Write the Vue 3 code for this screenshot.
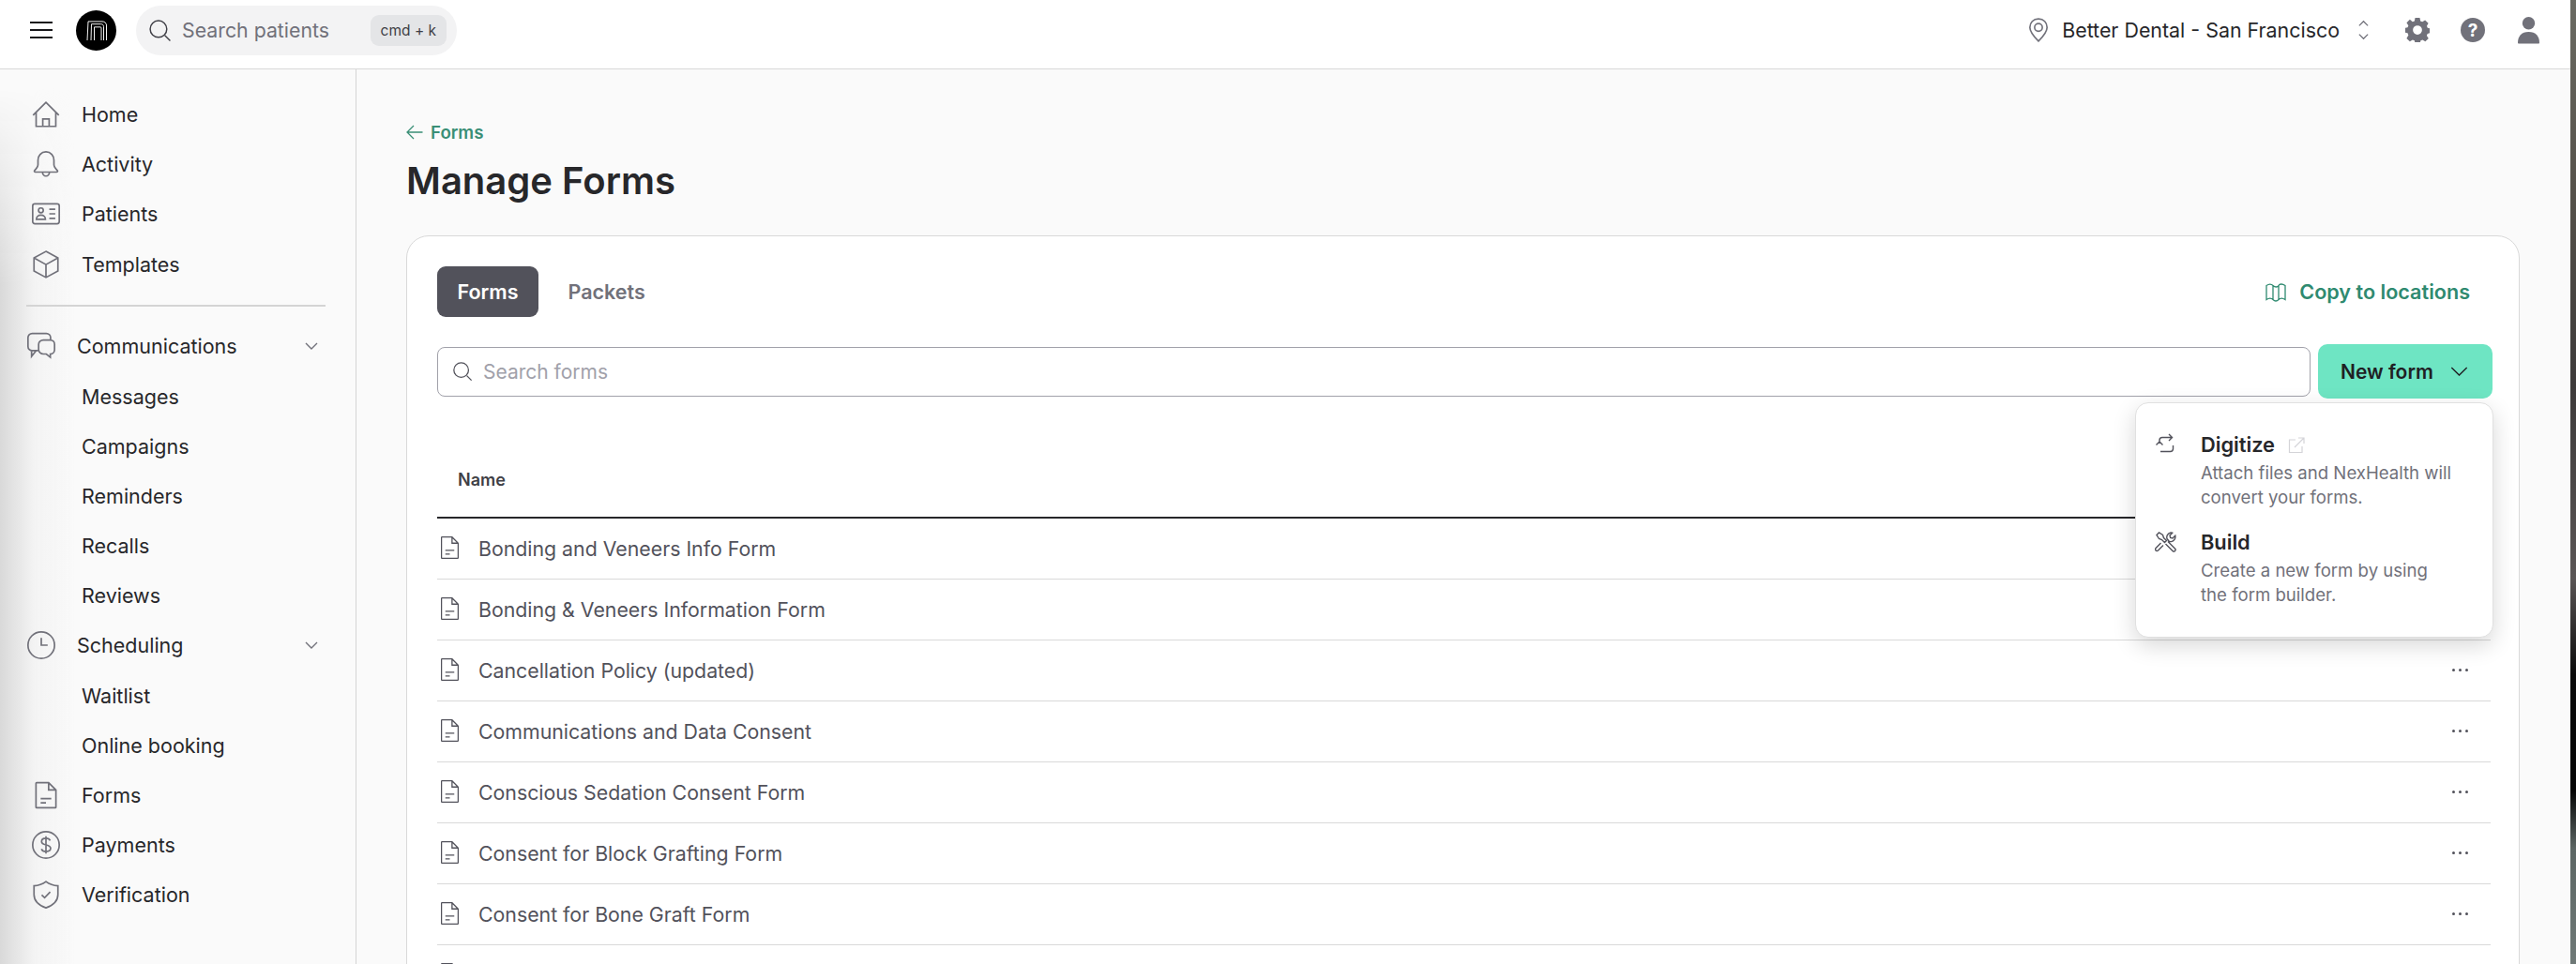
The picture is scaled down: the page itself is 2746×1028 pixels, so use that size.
<script setup>
const topNav = [
  { label: 'Home', icon: 'home' },
  { label: 'Activity', icon: 'bell' },
  { label: 'Patients', icon: 'card' },
  { label: 'Templates', icon: 'cube' },
]
const commsNav = ['Messages', 'Campaigns', 'Reminders', 'Recalls', 'Reviews']
const schedNav = ['Waitlist', 'Online booking']
const bottomNav = [
  { label: 'Forms', icon: 'doc' },
  { label: 'Payments', icon: 'dollar' },
  { label: 'Verification', icon: 'shield' },
]
// last one is cut off by the window, only the top of its icon shows
const forms = [
  'Bonding and Veneers Info Form',
  'Bonding & Veneers Information Form',
  'Cancellation Policy (updated)',
  'Communications and Data Consent',
  'Conscious Sedation Consent Form',
  'Consent for Block Grafting Form',
  'Consent for Bone Graft Form',
  '',
]

const iconPaths = {
  home: 'M2.3 12.6 12 3l9.7 9.6M4.6 10.4V21h14.8V10.4M9.6 21v-5.6h4.8V21',
  bell: 'M12 2.8c-3.6 0-6 2.8-6 6.2v3.4c0 1.6-1.2 3-2.6 4.4-.4.5-.1 1.2.6 1.2h16c.7 0 1-.7.6-1.2-1.4-1.4-2.6-2.8-2.6-4.4V9c0-3.4-2.4-6.2-6-6.2ZM9.4 18c0 1.6 1.1 3 2.6 3s2.6-1.4 2.6-3',
  card: 'M3.6 4.5h16.8c.9 0 1.6.7 1.6 1.6v11.8c0 .9-.7 1.6-1.6 1.6H3.6c-.9 0-1.6-.7-1.6-1.6V6.1c0-.9.7-1.6 1.6-1.6ZM14.5 8.5H19M14.5 12H19M14.5 15.5H19M8.2 7.6a1.8 1.8 0 1 1 0 3.6 1.8 1.8 0 0 1 0-3.6ZM4.8 16.2c0-1.9 1.5-3.2 3.4-3.2s3.4 1.3 3.4 3.2Z',
  cube: 'M12 2.2 21 7.1v9.8l-9 4.9-9-4.9V7.1ZM3 7.1l9 5 9-5M12 12.1v9.7',
  doc: 'M5 2.5h9l5.5 5.5v13c0 .3-.2.5-.5.5H5c-.3 0-.5-.2-.5-.5V3c0-.3.2-.5.5-.5ZM14 2.5V8h5.5M8 14.5h8M8 17.8h4',
  dollar: 'M12 2a10 10 0 1 1 0 20 10 10 0 0 1 0-20ZM15.2 8.8c-.5-1.1-1.7-1.8-3.2-1.8-1.9 0-3.3 1-3.3 2.5 0 3.4 6.8 1.6 6.8 5 0 1.5-1.5 2.5-3.5 2.5-1.6 0-2.9-.7-3.4-1.9M12 5.5v13',
  shield: 'M12 2.2c2.7 2 5.5 3 9 3.2V12c0 4.7-3.5 8-9 10-5.5-2-9-5.3-9-10V5.4c3.5-.2 6.3-1.2 9-3.2ZM8.8 12.2l2.2 2.2 4.2-4.4',
  comms: 'M9.5 15.5H5.2C3.4 15.5 2 14 2 12.3V5.7C2 3.9 3.4 2.5 5.2 2.5h10.6c1.8 0 3.2 1.4 3.2 3.2v1.8M4.7 15.5v4.3l3.4-4.3M13.5 7.5h5.3c1.8 0 3.2 1.4 3.2 3.2v4.1c0 1.7-1.4 3.2-3.2 3.2v2.500l-3-2.500h-2.300c-1.800 0-3.500-1.500-3.500-3.200v-4.100c0-1.800 1.700-3.200 3.500-3.200Z',
  clock: 'M12 2a10 10 0 1 1 0 20 10 10 0 0 1 0-20ZM12 6.5V12h4.8',
}
</script>

<template>
  <div class="page">
    <header class="topbar">
      <div class="top-left">
        <button class="menu-btn" aria-label="Menu"><span></span><span></span><span></span></button>
        <div class="logo">
          <svg viewBox="0 0 22 23" width="22" height="21" preserveAspectRatio="none" fill="none" stroke="#fff" stroke-width="1">
            <path d="M1 23 2 1h15c2.5 0 4.5 2 4.5 4.5V23" />
            <path d="M5 23 5.500 4h10c2 0 3 1.200 3 3v16" />
            <path d="M8.500 23V7.500h6.500c.8 0 1 .5 1 1.200V23" />
          </svg>
        </div>
        <div class="patient-search">
          <svg class="icon" viewBox="0 0 24 24" width="25" height="25" fill="none" stroke="#3f3f46" stroke-width="1.4">
            <circle cx="10.5" cy="10.5" r="8.5" /><path d="m17 17 5.5 5.5" />
          </svg>
          <span class="patient-search-text">Search patients</span>
          <kbd class="kbd">cmd + k</kbd>
        </div>
      </div>
      <div class="top-right">
        <svg class="pin" viewBox="0 0 24 30" width="22" height="28" fill="none" stroke="#71717a" stroke-width="1.8">
          <path d="M12 2C6 2 2 6.5 2 12c0 6 5.5 11.5 10 16 4.5-4.5 10-10 10-16 0-5.5-4-10-10-10Z" />
          <circle cx="12" cy="12" r="4.5" />
        </svg>
        <span class="location">Better Dental - San Francisco</span>
        <svg class="updown" viewBox="0 0 14 28" width="13" height="26" fill="none" stroke="#71717a" stroke-width="1.4">
          <path d="m2 9 5-5 5 5M2 19l5 5 5-5" />
        </svg>
        <svg class="gear" viewBox="0 0 24 24" width="26" height="26" fill="#71717a">
          <path fill-rule="evenodd" d="M9.7 0h4.6l.6 3.2 1.9.8 2.7-1.800 3.200 3.200L21.200 8l.8 1.900 2 .5v4.600l-2.100.6-.8 1.900 1.800 2.700-3.200 3.200-2.700-1.800-1.900.8-.6 3.100H9.700l-.6-3.100-1.900-.8-2.700 1.800-3.200-3.200L3.100 17l-.8-1.900L0 14.500v-4.600l2.300-.5.8-1.900-1.800-2.600 3.200-3.200L7.200 4l1.900-.8ZM12 7.500a4.500 4.500 0 1 0 0 9 4.500 4.500 0 0 0 0-9Z" />
        </svg>
        <div class="help">?</div>
        <svg class="person" viewBox="0 0 24 32" width="23" height="32" fill="#71717a">
          <circle cx="12" cy="8.5" r="7" />
          <path d="M1 31c-.6 0-1-.5-1-1 0-7 4-12 12-12s12 5 12 12c0 .5-.4 1-1 1Z" />
        </svg>
      </div>
    </header>

    <div class="body-row">
      <aside class="sidebar">
        <div class="edge-shade"></div>
        <nav class="nav">
          <a v-for="item in topNav" :key="item.label" class="nav-row">
            <svg class="nav-icon" viewBox="0 0 24 24" width="34" height="34" fill="none" stroke="#71717a" stroke-width="1.2">
              <path :d="iconPaths[item.icon]" />
            </svg>
            <span>{{ item.label }}</span>
          </a>
          <div class="nav-divider"></div>
          <a class="nav-row group">
            <svg class="nav-icon" viewBox="0 0 24 24" width="34" height="34" fill="none" stroke="#71717a" stroke-width="1.2">
              <path :d="iconPaths.comms" />
            </svg>
            <span>Communications</span>
            <svg class="caret" viewBox="0 0 14 8" width="14" height="8" fill="none" stroke="#71717a" stroke-width="1.4"><path d="m1 1 6 6 6-6" /></svg>
          </a>
          <a v-for="item in commsNav" :key="item" class="nav-row sub">{{ item }}</a>
          <a class="nav-row group">
            <svg class="nav-icon" viewBox="0 0 24 24" width="34" height="34" fill="none" stroke="#71717a" stroke-width="1.2">
              <path :d="iconPaths.clock" />
            </svg>
            <span>Scheduling</span>
            <svg class="caret" viewBox="0 0 14 8" width="14" height="8" fill="none" stroke="#71717a" stroke-width="1.4"><path d="m1 1 6 6 6-6" /></svg>
          </a>
          <a v-for="item in schedNav" :key="item" class="nav-row sub">{{ item }}</a>
          <a v-for="item in bottomNav" :key="item.label" class="nav-row">
            <svg class="nav-icon" viewBox="0 0 24 24" width="34" height="34" fill="none" stroke="#71717a" stroke-width="1.2">
              <path :d="iconPaths[item.icon]" />
            </svg>
            <span>{{ item.label }}</span>
          </a>
        </nav>
      </aside>

      <main class="main">
        <a class="back">
          <svg viewBox="0 0 18 16" width="18" height="16" fill="none" stroke="#3a8f76" stroke-width="1.3"><path d="M17.5 8H1M8 1 1 8l7 7" /></svg>
          <span>Forms</span>
        </a>
        <h1 class="title">Manage Forms</h1>

        <section class="card">
          <div class="tabs-row">
            <button class="tab active">Forms</button>
            <button class="tab">Packets</button>
            <a class="copy-link">
              <svg viewBox="0 0 24 24" width="24" height="24" fill="none" stroke="#2f8a70" stroke-width="1.3">
                <path d="M2 5.5c3-2 5-2 7 0s5 2 6 0 4-2 7 0v15c-3-2-5-2-7 0s-4 2-6 0-4-2-7 0ZM9 5.500v14.800M15 5.500v14.800" />
              </svg>
              <span>Copy to locations</span>
            </a>
          </div>

          <div class="search-row">
            <div class="search-box">
              <svg viewBox="0 0 24 24" width="22" height="22" fill="none" stroke="#52525b" stroke-width="1.4">
                <circle cx="10.5" cy="10.5" r="8.5" /><path d="m17 17 5.5 5.5" />
              </svg>
              <span>Search forms</span>
            </div>
            <button class="new-form">
              <span>New form</span>
              <svg viewBox="0 0 20 11" width="19" height="10" fill="none" stroke="#1f2023" stroke-width="1.5"><path d="m1 1 9 9 9-9" /></svg>
            </button>
          </div>

          <div class="table-head">Name</div>
          <div v-for="form in forms" :key="form" class="form-row">
            <svg class="form-icon" viewBox="4 2 16 20" width="19" height="24" fill="none" stroke="#52525b" stroke-width="1.1">
              <path :d="iconPaths.doc" />
            </svg>
            <span class="form-name">{{ form }}</span>
            <span class="dots"><i></i><i></i><i></i></span>
          </div>
        </section>
      </main>
    </div>

    <div class="dropdown">
      <div class="drop-item">
        <svg viewBox="0 0 24 24" width="24" height="24" fill="none" stroke="#52525b" stroke-width="1.4">
          <path d="M5 11V7.5C5 5.6 6.4 4.500 8 4.500h10M15 1l3.500 3.500L15 8M19.500 13v3.500c0 1.900-1.400 3-3 3H6M1.500 12.500 5 9l3.500 3.500" />
        </svg>
        <div>
          <div class="drop-title">Digitize
            <svg class="ext" viewBox="0 0 18 18" width="18" height="18" fill="none" stroke="#d4d4d8" stroke-width="1.2">
              <path d="M8 3H1.5v13.500H15V10M7 11 17 1M11 1h6v6" />
            </svg>
          </div>
          <div class="drop-text">Attach files and NexHealth will<br />convert your forms.</div>
        </div>
      </div>
      <div class="drop-item">
        <svg viewBox="0 0 24 24" width="24" height="24" fill="none" stroke="#52525b" stroke-width="1.4">
          <path d="M2 4.500 4.500 2l4 2.500 1 3 3 3-2 2-3-3-3-1ZM14 11.500l7.500 7.500c.8.8.8 1.700 0 2.500s-1.700.8-2.500 0L11.500 14M9 15.500l-5.500 5.500c-.8.7-1.800.7-2.400 0s-.7-1.700 0-2.400L6.500 13M13 8.500c-.8-2.700.8-6 4-6.500.7 0 1.200 0 1.700.2L16 5l.6 2.400L19 8l2.800-2.700c.5 3-1.300 6-4.300 6.300-.8 0-1.500 0-2.200-.3Z" />
        </svg>
        <div>
          <div class="drop-title">Build</div>
          <div class="drop-text">Create a new form by using<br />the form builder.</div>
        </div>
      </div>
    </div>

    <div class="wallpaper"></div>
  </div>
</template>

<style>
html, body {
  margin: 0;
  background: #fff;
}
</style>

<style scoped>
.page {
  position: relative;
  width: 2746px;
  height: 1028px;
  overflow: hidden;
  font-family: Inter, "Liberation Sans", sans-serif;
  color: #27272a;
  background: #fafafa;
}

.topbar {
  display: flex;
  align-items: center;
  justify-content: space-between;
  height: 74px;
  box-sizing: border-box;
  padding: 0 6px 9px 32px;
  background: #fff;
  border-bottom: 1.5px solid #d9d9d9;
}
.top-left, .top-right {
  display: flex;
  align-items: center;
}
.menu-btn {
  display: flex;
  flex-direction: column;
  gap: 5.5px;
  width: 24px;
  padding: 0;
  border: 0;
  background: none;
}
.menu-btn span {
  height: 2.3px;
  background: #18181b;
}
.logo {
  display: flex;
  align-items: center;
  justify-content: center;
  width: 43px;
  height: 43px;
  margin-left: 25px;
  border-radius: 50%;
  background: #000;
}
.patient-search {
  display: flex;
  align-items: center;
  width: 342px;
  height: 53px;
  box-sizing: border-box;
  margin-left: 21px;
  padding: 0 11px 0 13px;
  border-radius: 27px;
  background: #f3f3f4;
}
.patient-search-text {
  margin-left: 11px;
  font-size: 21.3px;
  color: #71717a;
}
.kbd {
  margin-left: auto;
  padding: 7px 11px;
  border-radius: 9px;
  background: #e4e5e7;
  font-family: Inter, sans-serif;
  font-size: 15.5px;
  color: #3f3f46;
}
.top-right {
  padding-right: 33px;
}
.location {
  margin-left: 14px;
  font-size: 21.4px;
  color: #27272a;
}
.updown {
  margin-left: 19px;
}
.gear {
  margin-left: 38px;
}
.help {
  display: flex;
  align-items: center;
  justify-content: center;
  width: 26px;
  height: 26px;
  margin-left: 33px;
  border-radius: 50%;
  background: #71717a;
  color: #fff;
  font-size: 19px;
  font-weight: 700;
}
.person {
  margin-left: 35px;
}

.body-row {
  display: flex;
  height: 954px;
}
.sidebar {
  position: relative;
  flex: 0 0 380px;
  box-sizing: border-box;
  border-right: 1.5px solid #d4d4d4;
  background: #fafafa;
}
.edge-shade {
  position: absolute;
  inset: 0 auto 0 0;
  width: 80px;
  background: linear-gradient(90deg, #d9d9d9, #f3f3f3 45%, rgba(250, 250, 250, 0));
  mask-image: linear-gradient(180deg, transparent 20px, #000 230px);
}
.nav {
  position: relative;
  padding-top: 21.5px;
}
.nav-row {
  display: flex;
  align-items: center;
  height: 53.2px;
  padding-left: 32px;
  font-size: 21.5px;
  color: #27272a;
}
.nav-row span {
  margin-left: 21px;
}
.nav-row.sub {
  padding-left: 87px;
}
.nav-row.group {
  padding-left: 27px;
}
.caret {
  margin-left: auto;
  margin-right: 40px;
}
.nav-divider {
  height: 1.5px;
  margin: 17px 32px 16px 28px;
  background: #d4d4d4;
}

.main {
  flex: 1;
  box-sizing: border-box;
  padding: 54px 60px 0 53px;
  min-width: 0;
}
.back {
  display: flex;
  align-items: center;
  gap: 8px;
  height: 26px;
  font-size: 18.7px;
  font-weight: 600;
  color: #3a8f76;
}
.title {
  margin: 14px 0 0;
  font-size: 40px;
  line-height: 50px;
  font-weight: 600;
  color: #27272a;
}
.card {
  margin-top: 33px;
  height: 860px;
  box-sizing: border-box;
  padding: 32px 30px 0 32px;
  border: 1.5px solid #d9d9d9;
  border-radius: 24px;
  background: #fff;
}
.tabs-row {
  display: flex;
  align-items: center;
  height: 54px;
}
.tab {
  height: 54px;
  margin-right: 10px;
  padding: 0 21.5px;
  border: 0;
  border-radius: 9px;
  background: none;
  font-family: inherit;
  font-size: 21.5px;
  font-weight: 600;
  color: #71717a;
}
.tab.active {
  background: #52525b;
  color: #fff;
}
.copy-link {
  display: flex;
  align-items: center;
  gap: 13px;
  margin-left: auto;
  margin-right: 22px;
  font-size: 21.6px;
  font-weight: 600;
  color: #2f8a70;
}
.search-row {
  display: flex;
  align-items: center;
  gap: 8px;
  margin-top: 29px;
  margin-right: -2px;
}
.search-box {
  display: flex;
  align-items: center;
  gap: 11px;
  flex: 1;
  height: 53px;
  box-sizing: border-box;
  padding-left: 15px;
  border: 1.5px solid #a1a1aa;
  border-radius: 8px;
  font-size: 21px;
  color: #a1a1aa;
}
.new-form {
  display: flex;
  align-items: center;
  gap: 18px;
  height: 58px;
  width: 186px;
  box-sizing: border-box;
  padding: 0 0 0 24px;
  border: 0;
  border-radius: 10px;
  background: #6ee5c3;
  font-family: inherit;
  font-size: 21px;
  font-weight: 600;
  color: #1f2023;
}
.table-head {
  height: 127.5px;
  box-sizing: border-box;
  padding: 75px 0 0 22px;
  border-bottom: 2px solid #27272a;
  font-size: 18px;
  font-weight: 600;
  line-height: 24px;
  color: #3f3f46;
}
.form-row {
  display: flex;
  align-items: center;
  height: 65px;
  box-sizing: border-box;
  padding-left: 4px;
  border-bottom: 1.5px solid #d9d9d9;
  font-size: 21.3px;
  color: #52525b;
}
.form-icon {
  margin-top: -2px;
}
.form-name {
  margin-left: 21px;
}
.dots {
  display: flex;
  gap: 3.5px;
  margin-left: auto;
  margin-right: 24px;
}
.dots i {
  width: 3.5px;
  height: 3.5px;
  border-radius: 50%;
  background: #52525b;
}

.dropdown {
  position: absolute;
  top: 429px;
  left: 2276px;
  display: flex;
  flex-direction: column;
  gap: 19px;
  width: 382px;
  height: 251px;
  box-sizing: border-box;
  padding: 28px 20px;
  border: 1px solid #e0e0e0;
  border-radius: 14px;
  background: #fff;
  box-shadow: 0 8px 24px rgba(0, 0, 0, 0.16);
}
.drop-item {
  display: flex;
  gap: 25px;
}
.drop-item > svg {
  flex: none;
  margin-top: 4px;
}
.drop-title {
  display: flex;
  align-items: center;
  gap: 14px;
  font-size: 21.8px;
  line-height: 33px;
  font-weight: 600;
  color: #27272a;
}
.drop-text {
  font-size: 18.6px;
  line-height: 26px;
  color: #71717a;
}

.wallpaper {
  position: absolute;
  top: 0;
  right: 0;
  bottom: 0;
  width: 6px;
  background: linear-gradient(180deg, #6b6b63 0%, #55514a 20%, #3d3a3a 40%, #5a5555 60%, #0a0a0a 70%, #050505 82%, #5c6664 88%, #6f7977 100%);
}
</style>
